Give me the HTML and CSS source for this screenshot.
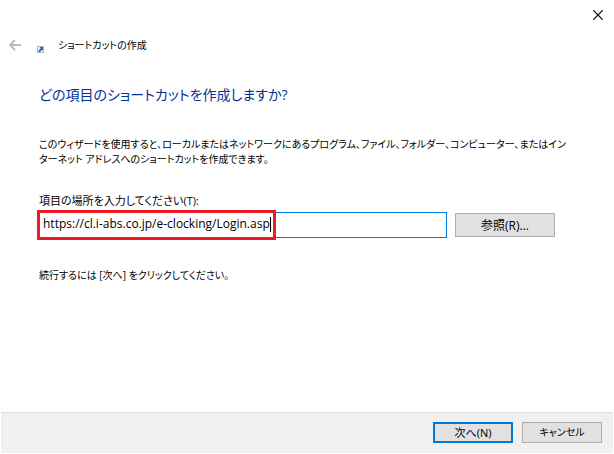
FILE: index.html
```
<!DOCTYPE html>
<html lang="ja">
<head>
  <meta charset="utf-8">
  <meta name="viewport" content="width=device-width">
  <title>ショートカットの作成</title>
  <link rel="stylesheet" href="styles.css">
</head>
<body>

  <div class="titlebar">
    <button class="close" type="button" aria-label="閉じる">
      <svg width="10" height="10" viewBox="0 0 10 10"><path d="M0.3 0.3L9.7 9.7M9.7 0.3L0.3 9.7" stroke="#000" stroke-width="1.2"/></svg>
    </button>
  </div>

  <header class="wizard-head">
    <button class="back" type="button" aria-label="戻る" disabled>
      <svg width="12" height="12" viewBox="0 0 12 12"><path d="M12 6H1.5M6 1L1.2 6L6 11" fill="none" stroke="#bdbdbd" stroke-width="2"/></svg>
    </button>
    <svg class="shortcut" width="7" height="7" viewBox="0 0 7 7">
      <rect x="0.5" y="0.5" width="6" height="6" fill="#f4f6f9" stroke="#b4b8bd"/>
      <path d="M2.5 1H6V4.5L5 3.8L3 6H1.5V4.5L3.7 2.4Z" fill="#2c62a8"/>
    </svg>
    <span>ショートカットの作成</span>
  </header>

  <main>
    <h1>どの項目のショートカットを作成しますか?</h1>
    <p class="intro">このウィザードを使用すると、ローカルまたはネットワークにあるプログラム、ファイル、フォルダー、コンピューター、またはイン<br>ターネット アドレスへのショートカットを作成できます。</p>

    <label for="location">項目の場所を入力してください(T):</label>
    <div class="row">
      <div class="field">
        <input id="location" type="text" value="https://cl.i-abs.co.jp/e-clocking/Login.asp" spellcheck="false">
        <div class="marker"><span class="caret"></span></div>
      </div>
      <button class="btn browse" type="button">参照(R)...</button>
    </div>

    <p>続行するには [次へ] をクリックしてください。</p>
  </main>

  <footer>
    <button class="btn primary" type="button">次へ(N)</button>
    <button class="btn cancel" type="button">キャンセル</button>
  </footer>

</body>
</html>
```
FILE: styles.css
```
* {
  box-sizing: border-box;
}
body {
  display: flex;
  flex-direction: column;
  min-height: 100vh;
  margin: 0;
  padding: 0 1px 1px;
  background: #fff;
  color: #000;
  font: 10px/15px "Open Sans", "Noto Sans CJK JP", sans-serif;
  font-feature-settings: "palt";
}
button, input {
  font: inherit;
  font-feature-settings: inherit;
  color: inherit;
}
.titlebar {
  display: flex;
  justify-content: flex-end;
  height: 30px;
}
.close, .back {
  display: flex;
  align-items: center;
  justify-content: center;
  padding: 0;
  border: 0;
  background: none;
}
.close {
  width: 30px;
}
.wizard-head {
  display: flex;
  align-items: center;
  height: 30px;
  padding-left: 8px;
}
.shortcut {
  margin: 8px 14px 0 16px;
}
main {
  flex: 1;
  padding: 24px 38px 0;
}
h1 {
  margin: 0 0 31px;
  color: #003399;
  font-size: 14px;
  font-weight: normal;
  line-height: 22px;
}
p {
  margin: 0;
}
.intro {
  margin-bottom: 26px;
}
label {
  display: block;
  margin-bottom: 4px;
  font-size: 11px;
}
.row {
  display: flex;
  gap: 8px;
  margin: 0 20px 30px 0;
}
.field {
  position: relative;
  flex: 1;
}
input {
  display: block;
  width: 100%;
  height: 26px;
  padding: 0 3px 3px;
  border: 1px solid #0078d7;
  outline: 0;
  background: #fff;
  font-size: 12px;
}
.marker {
  position: absolute;
  top: -2px;
  left: -2px;
  width: 239px;
  height: 30px;
  border: 3px solid #ed1c24;
  pointer-events: none;
}
.caret {
  position: absolute;
  top: 4px;
  right: 2px;
  width: 1px;
  height: 15px;
  background: #000;
}
.btn {
  width: 80px;
  height: 21px;
  padding: 0;
  border: 1px solid #adadad;
  background: #e1e1e1;
  font-size: 11px;
  line-height: 17px;
}
.browse {
  width: 100px;
  height: 24px;
  margin-top: 1px;
  font-size: 12px;
}
.primary {
  border: 2px solid #0078d7;
}
.cancel {
  font-size: 10px;
}
footer {
  display: flex;
  justify-content: flex-end;
  gap: 9px;
  padding: 9px 11px 10px;
  border-top: 1px solid #dfdfdf;
  background: #f0f0f0;
}
```
